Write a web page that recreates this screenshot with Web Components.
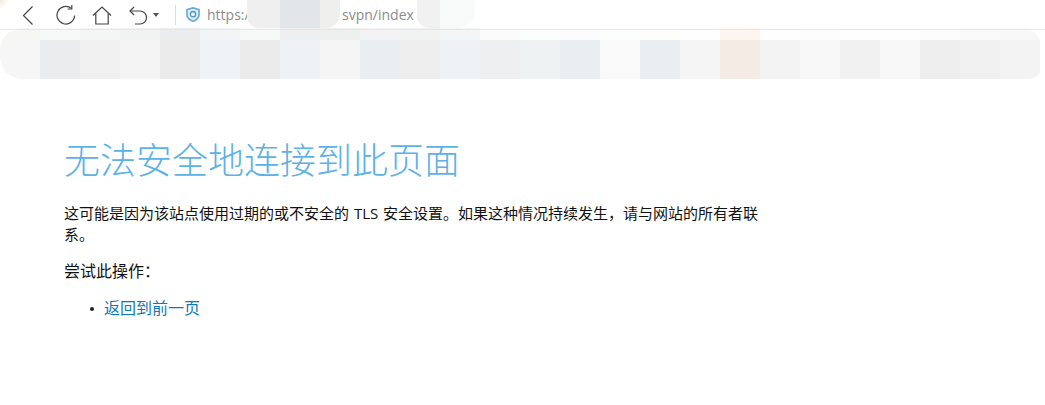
<!DOCTYPE html>
<html lang="zh-CN">
<head>
<meta charset="utf-8">
<title>无法安全地连接到此页面</title>
<style>
html, body { margin: 0; background: #ffffff; }
body { font-family: "Noto Sans CJK SC", sans-serif; overflow: hidden; }
</style>
</head>
<body>
<browser-toolbar url-start="https:/" url-end="svpn/index"></browser-toolbar>
<mosaic-strip></mosaic-strip>
<error-page>
  <span slot="title">无法安全地连接到此页面</span>
  <span slot="message">这可能是因为该站点使用过期的或不安全的 TLS 安全设置。如果这种情况持续发生，请与网站的所有者联系。</span>
  <span slot="hint">尝试此操作：</span>
  <a slot="action" href="#">返回到前一页</a>
</error-page>

<script>
// toolbar: nav icons, separator, address text with the blurred host over it
const toolbarTemplate = document.createElement('template');
toolbarTemplate.innerHTML = `
<style>
:host {
  display: flex;
  align-items: center;
  position: relative;
  height: 29px;
  border-bottom: 1px solid #e4e6e8;
  background: radial-gradient(circle at 0 0, #f1e8d8 0, rgba(241, 232, 216, 0) 9px);
}
svg { display: block; flex: none; fill: none; stroke: #444; stroke-width: 1.2; }
.back { margin-left: 21px; }
.reload { margin-left: 21px; }
.home { margin-left: 16px; }
.undo { margin-left: 17px; }
.caret { margin-left: 6px; stroke: none; fill: #555; }
.sep { width: 1px; height: 20px; background: #dcdcdc; margin-left: 16px; flex: none; }
.shield { margin-left: 10px; stroke: #62aee2; stroke-width: 1.7; }
.url {
  margin-left: 7px;
  display: flex;
  font: 14px/20px "Open Sans", sans-serif;
  color: #8c8c8c;
  white-space: nowrap;
}
.url #start { width: 135px; flex: none; }
.blur {
  position: absolute;
  top: 0;
  left: 247px;
  height: 28px;
  display: flex;
  pointer-events: none;
}
.blur i { display: block; height: 100%; }
.after {
  position: absolute;
  top: 0;
  left: 417px;
  height: 28px;
  width: 58px;
  display: flex;
  border-radius: 0 0 18px 12px;
  overflow: hidden;
}
.after i { display: block; height: 100%; }
</style>
<svg class="back" width="14" height="22" viewBox="0 0 14 22"><path d="M11.5 2.5 2.5 11.5 11.5 20.5"/></svg>
<svg class="reload" width="20" height="21" viewBox="0 0 20 21"><path d="M15.4 4.4A8.8 8.8 0 1 0 18.6 11.5"/><path d="M15.8 1v4h-4.2"/></svg>
<svg class="home" width="20" height="20" viewBox="0 0 20 20"><path d="M1 10.5 10 2l9 8.5"/><path d="M3.8 8.5V19h12.4V8.5"/></svg>
<svg class="undo" width="18" height="20" viewBox="0 0 18 20"><path d="M5 2 1 6l4 4"/><path d="M1 6h10a5.5 5.5 0 0 1 0 13H6"/></svg>
<svg class="caret" width="6" height="4" viewBox="0 0 6 4"><path d="M0 0h6L3 4z"/></svg>
<div class="sep"></div>
<svg class="shield" width="14" height="15" viewBox="0 0 14 15"><path fill="#e3f0fa" d="M7 .9 13 2.6v5.2c0 3-2.6 5.3-6 6.4-3.4-1.1-6-3.4-6-6.4V2.6z"/><circle cx="7" cy="7.2" r="2.7" stroke="#5f8fae" stroke-width="1.3"/></svg>
<div class="url"><span id="start"></span><span id="end"></span></div>
<div class="blur">
  <i style="width:33px;background:#efefef;border-radius:0 0 0 12px"></i>
  <i style="width:40px;background:#e2e6e9"></i>
  <i style="width:20px;background:#efefee;border-radius:0 0 14px 0"></i>
</div>
<div class="after">
  <i style="width:23px;background:#f1f1f1"></i>
  <i style="width:35px;background:#f8f9f9"></i>
</div>
`;

class BrowserToolbar extends HTMLElement {
  constructor() {
    super();
    const shadow = this.attachShadow({ mode: 'open' });
    shadow.appendChild(toolbarTemplate.content.cloneNode(true));
    shadow.getElementById('start').textContent = this.getAttribute('url-start');
    shadow.getElementById('end').textContent = this.getAttribute('url-end');
  }
}
customElements.define('browser-toolbar', BrowserToolbar);

// the pixelated band: two rows of 40px tiles
const upperTiles = ['#f6f6f5', '#f7f8f8', '#f4f5f5', '#f1f2f2', '#ebecee', '#f1f5f6', '#f7f8f8',
  '#efefef', '#eef0f0', '#f3f3f3', '#f1f2f2', '#f4f5f5', '#fbfbfb', '#fcfdfd', '#fcfcfc', '#fcfdfd',
  '#fdfdfc', '#fefefe', '#fdf5ef', '#fefefe', '#fdfdfd', '#fefefe', '#fefefe', '#fcfcfc', '#f9f9f9', '#f8f8f8'];
const lowerTiles = ['#f6f6f6', '#ebecee', '#f0f0f0', '#f4f4f4', '#ebebeb', '#eef3f5', '#ebebeb',
  '#eef2f5', '#f5f5f5', '#e9eff1', '#eeeeee', '#eef2f4', '#eeeff0', '#eff2f3', '#e9eff1', '#f9f9f9',
  '#e9eef1', '#f5f5f5', '#f4ebe4', '#f3f3f3', '#f8f8f8', '#f1f1f1', '#f8f8f8', '#eeeeee', '#f0f0f0', '#f3f3f3'];

const stripTemplate = document.createElement('template');
stripTemplate.innerHTML = `
<style>
:host {
  display: block;
  margin-top: -2px;
}
.grid {
  display: grid;
  grid-template-columns: repeat(26, 40px);
  grid-template-rows: 12px 39px;
  width: 1042px;
  border-radius: 22px 20px 14px 22px;
  overflow: hidden;
}
.tile.clear { background-clip: content-box !important; padding-top: 2px; box-sizing: border-box; }
</style>
<div class="grid"></div>
`;

class MosaicStrip extends HTMLElement {
  constructor() {
    super();
    const shadow = this.attachShadow({ mode: 'open' });
    shadow.appendChild(stripTemplate.content.cloneNode(true));
    const grid = shadow.querySelector('.grid');
    [upperTiles, lowerTiles].forEach((row, rowIndex) => {
      row.forEach((color, i) => {
        const tile = document.createElement('div');
        tile.className = 'tile';
        tile.style.background = color;
        // the address bar's line still shows above these ones
        if (rowIndex === 0 && i >= 12 && i <= 16) tile.classList.add('clear');
        grid.appendChild(tile);
      });
    });
  }
}
customElements.define('mosaic-strip', MosaicStrip);

// the error message itself
const errorTemplate = document.createElement('template');
errorTemplate.innerHTML = `
<style>
:host {
  display: block;
  padding: 58px 0 0 64px;
  width: 700px;
  color: #111;
  font: 15px/21px "Open Sans", "Noto Sans CJK SC", sans-serif;
  word-spacing: 1px;
}
h1 {
  margin: 0 0 18px;
  font-size: 36px;
  line-height: 48px;
  font-weight: 300;
  color: #5cb1e6;
}
p { margin: 0 0 16px; }
p.hint { font-size: 16px; }
ul { margin: 0; padding: 0 0 0 26px; list-style: none; }
li {
  margin-top: 16px;
  display: flex;
  align-items: center;
  font-size: 16px;
}
li::before {
  content: "";
  width: 4px;
  height: 4px;
  border-radius: 50%;
  background: #222;
  margin-right: 10px;
}
::slotted(a) { color: #0f78b8; text-decoration: none; }
</style>
<h1><slot name="title"></slot></h1>
<p><slot name="message"></slot></p>
<p class="hint"><slot name="hint"></slot></p>
<ul><li><slot name="action"></slot></li></ul>
`;

class ErrorPage extends HTMLElement {
  constructor() {
    super();
    const shadow = this.attachShadow({ mode: 'open' });
    shadow.appendChild(errorTemplate.content.cloneNode(true));
  }
}
customElements.define('error-page', ErrorPage);
</script>
</body>
</html>
